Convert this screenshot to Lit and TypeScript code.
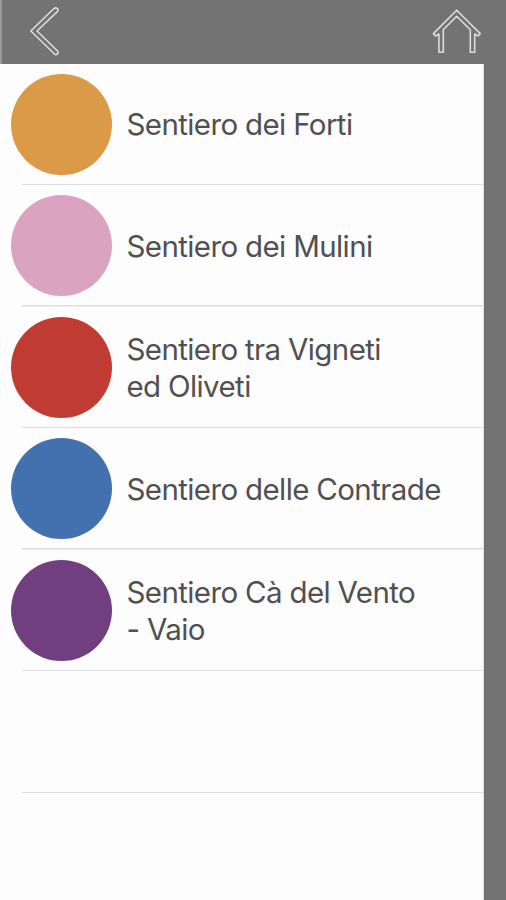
import { LitElement, html, css } from "lit";
import { customElement, property } from "lit/decorators.js";

interface Trail {
  color: string;
  lines: string[];
}

const TRAILS: Trail[] = [
  { color: "#da9a48", lines: ["Sentiero dei Forti"] },
  { color: "#daa4c0", lines: ["Sentiero dei Mulini"] },
  { color: "#c03c32", lines: ["Sentiero tra Vigneti", "ed Oliveti"] },
  { color: "#4370ae", lines: ["Sentiero delle Contrade"] },
  { color: "#713e80", lines: ["Sentiero Cà del Vento", "- Vaio"] },
];

@customElement("trail-row")
class TrailRow extends LitElement {
  @property({ attribute: false }) trail?: Trail;

  static styles = css`
    :host {
      display: block;
      height: 121.6px;
      flex: none;
    }
    .row {
      box-sizing: border-box;
      height: 100%;
      display: flex;
      align-items: center;
      gap: 14.5px;
      padding: 0 0 0.5px 11px;
      background: linear-gradient(#dcdddd, #dcdddd) 22px 100% / 100% 1.5px no-repeat;
    }
    .dot {
      width: 101px;
      height: 101px;
      border-radius: 50%;
      flex: none;
    }
    .label {
      font: 400 29.5px/37px Inter, "Liberation Sans", sans-serif;
      letter-spacing: -0.6px;
      word-spacing: -0.2px;
      color: #505052;
      white-space: nowrap;
      padding-top: 1.5px;
    }
  `;

  render() {
    const t = this.trail;
    return html`<div class="row">
      ${t
        ? html`<span class="dot" style="background:${t.color}"></span>
            <div class="label">${t.lines.map((l) => html`<div>${l}</div>`)}</div>`
        : null}
    </div>`;
  }
}

@customElement("app-root")
class AppRoot extends LitElement {
  static styles = css`
    :host {
      display: block;
      width: 506px;
      height: 900px;
      overflow: hidden;
      background: #737373;
    }
    .screen {
      height: 100%;
      display: flex;
      flex-direction: column;
    }
    .bar {
      box-sizing: border-box;
      height: 63.5px;
      flex: none;
      display: flex;
      justify-content: space-between;
      align-items: flex-start;
      padding: 6px 23px 0 26px;
      border-left: 2px solid #989898;
    }
    .icon {
      display: block;
      fill: none;
      stroke: #dcdcdc;
      stroke-width: 1.6;
      stroke-linejoin: round;
    }
    .list {
      flex: 1;
      min-height: 0;
      width: 483.5px;
      box-sizing: border-box;
      display: flex;
      flex-direction: column;
      background: #fdfdfd;
      border-right: 1px solid #e0e0e0;
      overflow: hidden;
    }
  `;

  render() {
    return html`<div class="screen">
      <header class="bar">
        <svg class="icon" width="34" height="52" viewBox="28 6 34 52">
          <path d="M30.8 31 L54.2 8.3 Q55.8 7.2 57.5 8.6 Q58.8 10 57.6 11.4 L37 31 L57.6 51 Q58.8 52.6 57.4 54 Q55.8 55.2 54.2 53.8 Z" />
        </svg>
        <svg class="icon" width="52" height="50" viewBox="431 6 52 50">
          <path d="M456.7 10.2 L433.4 33.6 L435.6 36 L438.9 34 V52.2 H443.3 V29.7 L456.7 16.3 L470.3 29.7 V52.2 H474.7 V34 L478 36 L480.2 33.6 Z" />
        </svg>
      </header>
      <main class="list">
        ${TRAILS.map((t) => html`<trail-row .trail=${t}></trail-row>`)}
        <trail-row></trail-row>
      </main>
    </div>`;
  }
}
